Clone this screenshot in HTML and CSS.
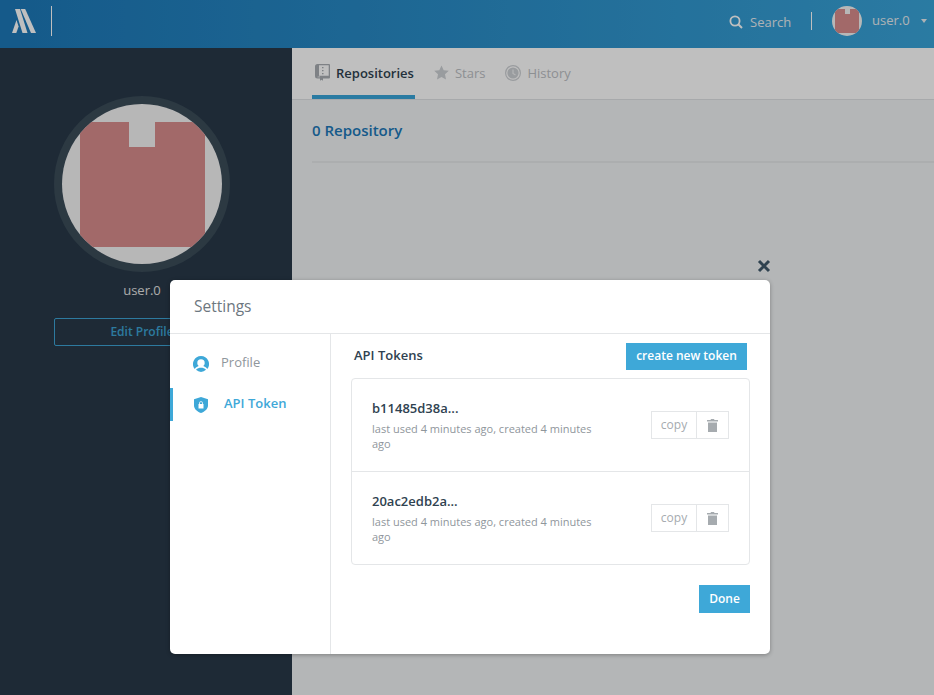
FILE: index.html
```html
<!DOCTYPE html>
<html>
<head>
    <title>Settings</title>
    <link rel="stylesheet" href="styles.css">
</head>
<body>
    <header class="topbar">
        <svg class="logo" width="24" height="24" viewBox="0 0 24 24">
            <polygon points="3,0 8,0 15.500,24 10.500,24" fill="#fff"/>
            <polygon points="8.700,0 13.200,0 24,24 19,24" fill="#fff"/>
            <polygon points="0,24 4.300,24 6.600,17.500 4.500,11" fill="#fff"/>
        </svg>
        <span class="logo-line"></span>
        <div class="topbar-right">
            <svg class="search-icon" width="14" height="14" viewBox="0 0 14 14">
                <circle cx="6" cy="6" r="4.600" fill="none" stroke="#fff" stroke-width="1.800"/>
                <line x1="9.500" y1="9.500" x2="13" y2="13" stroke="#fff" stroke-width="2"/>
            </svg>
            <span class="search-text">Search</span>
            <span class="top-line"></span>
            <span class="avatar-small"><span class="tile-small"><span class="notch-small"></span></span></span>
            <span class="top-user">user.0</span>
            <span class="caret"></span>
        </div>
    </header>

    <div class="page">
        <aside class="sidebar">
            <div class="avatar-ring">
                <div class="avatar">
                    <div class="tile"><div class="notch"></div></div>
                </div>
            </div>
            <div class="side-user">user.0</div>
            <a class="edit-btn">Edit Profile</a>
        </aside>
        <main class="main">
            <nav class="tabs">
                <a class="tab active">
                    <svg width="15" height="17" viewBox="0 0 15 17">
                        <path d="M2.500 0H14a1 1 0 0 1 1 1v12.500a1 1 0 0 1-1 1H8v2.200l-1.500-1-1.500 1v-2.200H2.500A2.500 2.500 0 0 1 0 12V2.500A2.500 2.500 0 0 1 2.500 0zM4 1.300v10.400h9.700V1.300zM2.500 12.800a.9.900 0 0 0 0 .5h2.500v-.7z" fill="#a8adb2" fill-rule="evenodd"/>
                        <path d="M7 3h1.500v1.200H7zM7 6h1.500v1.200H7zM7 9h1.500v1.200H7z" fill="#a8adb2"/>
                    </svg>
                    Repositories
                </a>
                <a class="tab">
                    <svg width="15" height="15" viewBox="0 0 15 15">
                        <polygon points="7.500,0.500 9.700,5.200 14.800,5.800 11,9.300 12,14.500 7.500,11.900 3,14.500 4,9.300 0.200,5.800 5.300,5.200" fill="#cdd0d4"/>
                    </svg>
                    Stars
                </a>
                <a class="tab">
                    <svg width="16" height="16" viewBox="0 0 16 16">
                        <circle cx="8" cy="8" r="7.400" fill="none" stroke="#cdd0d4" stroke-width="1.200"/>
                        <circle cx="8" cy="8" r="5.600" fill="#cdd0d4"/>
                        <path d="M8 4.500V8.500L10.500 10" fill="none" stroke="#f1f2f3" stroke-width="1.200"/>
                    </svg>
                    History
                </a>
            </nav>
            <section class="repo-section">
                <h3 class="repo-count">0 Repository</h3>
            </section>
        </main>
    </div>

    <div class="overlay"></div>

    <svg class="close-x" width="14" height="14" viewBox="0 0 14 14">
        <path d="M2 2L12 12M12 2L2 12" stroke="#2f4250" stroke-width="3"/>
    </svg>

    <div class="modal">
        <div class="modal-head">Settings</div>
        <div class="modal-body">
            <div class="modal-nav">
                <a class="nav-item">
                    <svg width="16" height="16" viewBox="0 0 16 16">
                        <path d="M8 0a8 8 0 0 1 6.300 12.900C13 11.200 11.500 10.600 10.300 10.100a3.800 3.800 0 0 0 1.400-3.200 3.700 3.700 0 0 0-7.400 0 3.800 3.800 0 0 0 1.400 3.200C4.500 10.600 3 11.200 1.700 12.900A8 8 0 0 1 8 0z" fill="#3ea8d8"/>
                        <path d="M3 13.800c1.300-1.500 3-2 5-2s3.700.500 5 2A8 8 0 0 1 8 16a8 8 0 0 1-5-2.200z" fill="#3ea8d8"/>
                    </svg>
                    <span class="nav-label">Profile</span>
                </a>
                <a class="nav-item selected">
                    <svg width="14" height="16" viewBox="0 0 14 16">
                        <path fill-rule="evenodd" d="M7 0l7 2.200v6.300c0 3.300-3 6-7 7.500-4-1.500-7-4.200-7-7.500V2.200zM4.500 7v4.500h5V7h-.700V6a1.800 1.800 0 0 0-3.600 0v1zM6 7V6a1 1 0 0 1 2 0v1z" fill="#3ea8d8"/>
                    </svg>
                    <span class="nav-label">API Token</span>
                </a>
            </div>
            <div class="modal-content">
                <div class="tokens-head">
                    <h4 class="tokens-title">API Tokens</h4>
                    <a class="btn-blue btn-create">create new token</a>
                </div>
                <div class="token-list">
                    <div class="token-row">
                        <div class="token-info">
                            <div class="token-name">b11485d38a...</div>
                            <div class="token-meta">last used 4 minutes ago, created 4 minutes ago</div>
                        </div>
                        <div class="token-actions">
                            <a class="copy-btn">copy</a>
                            <a class="trash-btn">
                                <svg width="11" height="13" viewBox="0 0 11 13"><path d="M4 0h3l.500 1H11v1.500H0V1h3.500zM1 3.500h9V13H1z" fill="#a6abaf"/></svg>
                            </a>
                        </div>
                    </div>
                    <div class="token-row">
                        <div class="token-info">
                            <div class="token-name">20ac2edb2a...</div>
                            <div class="token-meta">last used 4 minutes ago, created 4 minutes ago</div>
                        </div>
                        <div class="token-actions">
                            <a class="copy-btn">copy</a>
                            <a class="trash-btn">
                                <svg width="11" height="13" viewBox="0 0 11 13"><path d="M4 0h3l.500 1H11v1.500H0V1h3.500zM1 3.500h9V13H1z" fill="#a6abaf"/></svg>
                            </a>
                        </div>
                    </div>
                </div>
                <div class="modal-foot">
                    <a class="btn-blue btn-done">Done</a>
                </div>
            </div>
        </div>
    </div>
</body>
</html>
```

FILE: styles.css
```css
html, body {
    margin: 0;
    height: 695px;
    overflow: hidden;
}
body {
    font-family: "Open Sans", "Noto Sans", sans-serif;
    background-color: #f1f3f5;
    color: #2f4250;
}

/* top bar */
.topbar {
    height: 48px;
    padding-bottom: 6px;
    box-sizing: border-box;
    display: flex;
    align-items: center;
    background: linear-gradient(90deg, #1c78b8, #39a4d9);
}
.logo {
    margin-left: 12px;
}
.logo-line {
    width: 1px;
    height: 30px;
    margin-left: 15px;
    background-color: #fff;
}
.topbar-right {
    margin-left: auto;
    display: flex;
    align-items: center;
    color: #e8eef2;
    font-size: 13px;
}
.search-icon {
    margin-right: 7px;
    margin-top: 1px;
}
.search-text {
    width: 41px;
    margin-top: 1px;
}
.top-line {
    width: 1px;
    height: 18px;
    margin-left: 20px;
    background-color: #fff;
}
.avatar-small {
    width: 30px;
    height: 30px;
    margin-left: 20px;
    border-radius: 50%;
    background-color: #f5f5f5;
    overflow: hidden;
    display: block;
}
.tile-small {
    display: block;
    width: 24px;
    height: 24px;
    margin: 3px auto 0;
    background-color: #d98d8d;
}
.notch-small {
    display: block;
    width: 5px;
    height: 5px;
    margin-left: 10px;
    background-color: #f5f5f5;
}
.top-user {
    margin-left: 10px;
    width: 38px;
    margin-top: -2px;
}
.caret {
    margin-left: 11px;
    margin-right: 7px;
    width: 0;
    height: 0;
    border-left: 3.500px solid transparent;
    border-right: 3.500px solid transparent;
    border-top: 4px solid #e8eef2;
    margin-top: -1px;
}

/* page */
.page {
    display: flex;
    height: 647px;
}
.sidebar {
    width: 292px;
    background-color: #283948;
    display: flex;
    flex-direction: column;
    align-items: center;
    padding: 48px 8px 0 0;
    box-sizing: border-box;
}
.avatar-ring {
    padding: 8px;
    border-radius: 50%;
    background-color: #3b4c59;
}
.avatar {
    width: 160px;
    height: 160px;
    border-radius: 50%;
    background-color: #f5f5f5;
    overflow: hidden;
}
.tile {
    width: 125px;
    height: 125px;
    margin: 18px 0 0 18px;
    background-color: #d98d8d;
}
.notch {
    width: 26px;
    height: 25px;
    margin-left: 49px;
    background-color: #f5f5f5;
}
.side-user {
    margin-top: 9px;
    font-size: 13px;
    line-height: 18px;
    color: #e4e4e4;
}
.edit-btn {
    width: 176px;
    height: 28px;
    margin-top: 19px;
    box-sizing: border-box;
    border: 1px solid #3ca3d4;
    border-radius: 2px;
    color: #3ca3d4;
    font-size: 12px;
    font-weight: 600;
    line-height: 26px;
    text-align: center;
}
.main {
    flex: 1;
}
.tabs {
    height: 51px;
    display: flex;
    gap: 16px;
    padding-left: 20px;
    background-color: #fff;
    border-bottom: 1px solid #dfe2e5;
}
.tab {
    display: flex;
    align-items: center;
    gap: 6px;
    height: 45px;
    padding: 2px 1px 0 3px;
    font-size: 13px;
    color: #bcc0c4;
}
.tab.active {
    border-bottom: 4px solid #39a4d9;
    color: #2f4250;
    font-weight: 600;
}
.repo-section {
    margin-left: 20px;
    height: 63px;
    border-bottom: 2px solid #e6e8ea;
    box-sizing: border-box;
}
.repo-count {
    margin: 0;
    padding-top: 19px;
    font-size: 15px;
    line-height: 22px;
    font-weight: 600;
    color: #1c78b8;
}

/* dimmer and dialog */
.overlay {
    position: absolute;
    left: 0;
    top: 0;
    width: 934px;
    height: 695px;
    background-color: rgba(0, 0, 0, 0.25);
}
.close-x {
    position: absolute;
    left: 757px;
    top: 259px;
}
.modal {
    position: absolute;
    left: 170px;
    top: 280px;
    width: 600px;
    height: 374px;
    display: flex;
    flex-direction: column;
    background-color: #fff;
    border-radius: 5px;
    box-shadow: 0 1px 4px rgba(0, 0, 0, 0.3);
}
.modal-head {
    height: 53px;
    padding-left: 24px;
    border-bottom: 1px solid #e4e6e8;
    font-size: 15.500px;
    line-height: 53px;
    color: #6d7780;
}
.modal-body {
    flex: 1;
    display: flex;
}
.modal-nav {
    width: 160px;
    border-right: 1px solid #e4e6e8;
    padding-top: 13px;
}
.nav-item {
    display: flex;
    align-items: center;
    height: 33px;
    margin-bottom: 8px;
    padding-left: 23px;
    gap: 12px;
    font-size: 13px;
    color: #8f969c;
    box-sizing: border-box;
}
.nav-label {
    margin-top: -3px;
}
.nav-item.selected {
    padding-left: 21px;
    gap: 16px;
    border-left: 3px solid #3ea8d8;
    color: #3ea8d8;
    font-weight: 600;
}
.modal-content {
    flex: 1;
    padding: 9px 20px 0 20px;
}
.tokens-head {
    display: flex;
    justify-content: space-between;
    padding: 0 3px;
}
.tokens-title {
    margin: 0;
    padding-top: 3px;
    font-size: 13px;
    line-height: 18px;
    font-weight: 600;
    color: #2f4250;
}
.btn-blue {
    display: block;
    background-color: #3ea8d8;
    color: #fff;
    font-size: 12px;
    font-weight: 600;
    text-align: center;
}
.btn-create {
    width: 121px;
    height: 27px;
    line-height: 26px;
}
.token-list {
    margin-top: 8px;
    border: 1px solid #e4e6e8;
    border-radius: 4px;
}
.token-row {
    height: 92px;
    display: flex;
    justify-content: space-between;
    align-items: center;
    padding: 0 20px;
    box-sizing: border-box;
}
.token-row + .token-row {
    border-top: 1px solid #e4e6e8;
    height: 93px;
}
.token-info {
    width: 230px;
}
.token-name {
    font-size: 13px;
    font-weight: 600;
    line-height: 18px;
    color: #2f4250;
}
.token-meta {
    margin-top: 4px;
    font-size: 11px;
    line-height: 15px;
    color: #8f969c;
}
.token-actions {
    display: flex;
    height: 28px;
}
.copy-btn {
    width: 46px;
    box-sizing: border-box;
    border: 1px solid #e4e6e8;
    font-size: 12px;
    line-height: 25px;
    text-align: center;
    color: #a6abaf;
}
.trash-btn {
    width: 32px;
    box-sizing: border-box;
    display: flex;
    align-items: center;
    justify-content: center;
    border: 1px solid #e4e6e8;
    border-left: 0;
}
.modal-foot {
    display: flex;
    justify-content: flex-end;
    margin-top: 20px;
}
.btn-done {
    width: 51px;
    height: 28px;
    line-height: 27px;
}
```
